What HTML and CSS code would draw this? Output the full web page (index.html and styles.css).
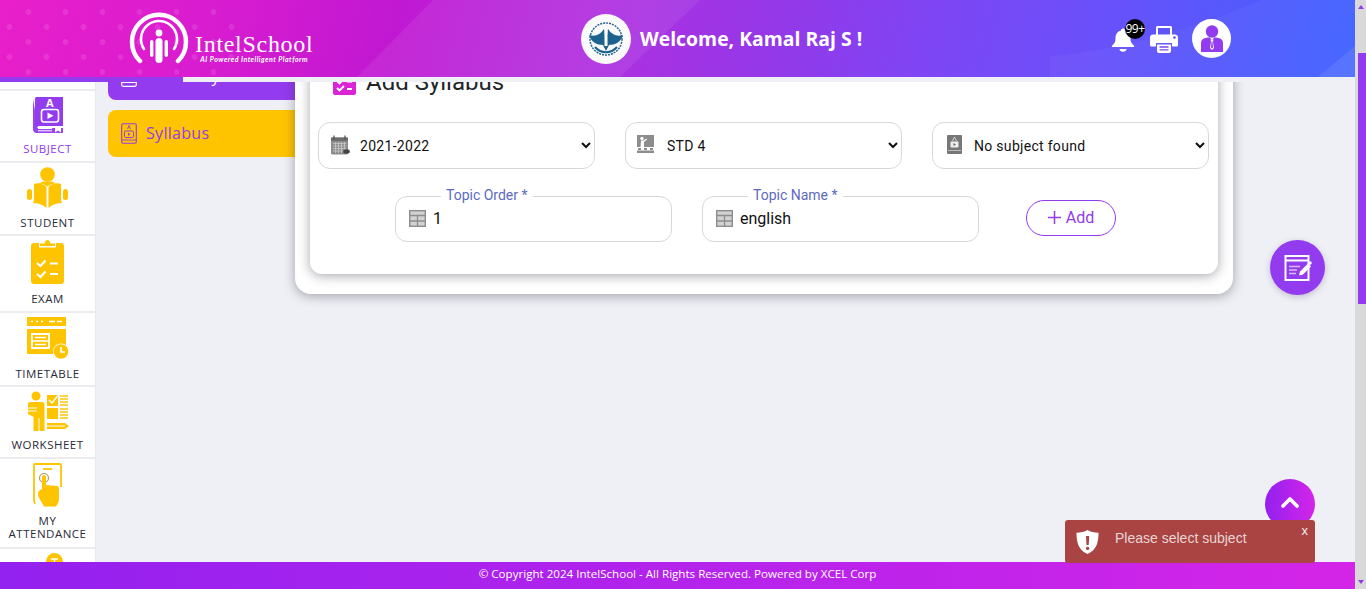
FILE: index.html
```html
<!DOCTYPE html>
<html lang="en">
<head>
<meta charset="utf-8">
<title>IntelSchool - Add Syllabus</title>
<link rel="stylesheet" href="styles.css">
</head>
<body>
<div class="page">
  <div class="main">
    <header class="header">
      <svg class="header-art" viewBox="0 0 1355 77" preserveAspectRatio="none" aria-hidden="true">
        <path d="M357 77 L433 0 H700 L620 77 Z" fill="#fff" opacity=".07"/>
        <path d="M1050 56 C1120 50 1190 30 1262 0 H1355 V77 H1050 Z" fill="#fff" opacity=".035"/>
        <path d="M1318 77 L1355 46 V77 Z" fill="#fff" opacity=".09"/>
      </svg>
      <div class="header-dots"></div>
      <div class="brand">
        <svg class="brand-mark" width="60" height="52" viewBox="0 0 60 52" aria-hidden="true">
          <g fill="none" stroke="#fff" stroke-linecap="round">
            <path d="M11 49 A27 27 0 1 1 49 49" stroke-width="4.5"/>
            <path d="M15 37 A18 18 0 1 1 45 37" stroke-width="2.6"/>
          </g>
          <circle cx="30" cy="21" r="3.4" fill="#fff"/>
          <rect x="26.5" y="26" width="7" height="25" rx="3.5" fill="#fff"/>
          <rect x="21" y="28" width="3.4" height="17" rx="1.7" fill="#fff"/>
          <rect x="35.6" y="28" width="3.4" height="17" rx="1.7" fill="#fff"/>
        </svg>
        <div class="brand-text">
          <span class="brand-name">IntelSchool</span>
          <span class="brand-tag">AI Powered Intelligent Platform</span>
        </div>
      </div>
      <div class="welcome">
        <span class="school-badge">
          <svg width="38" height="38" viewBox="0 0 38 38" aria-hidden="true">
            <circle cx="19" cy="19" r="16" fill="none" stroke="#1f5f8f" stroke-width="1.4" stroke-dasharray="2 1"/>
            <path d="M2 15 C8 17 13 15 17 9 L19 22 L21 9 C25 15 30 17 36 15 C34 22 28 25 22 25 L19 31 L16 25 C10 25 4 22 2 15Z" fill="#1b628f"/>
            <path d="M8 27 C14 34 24 34 30 27" fill="none" stroke="#1b628f" stroke-width="2"/>
            <rect x="17.5" y="11" width="3" height="15" fill="#fff"/>
          </svg>
        </span>
        <h1 class="welcome-text">Welcome, Kamal Raj S !</h1>
      </div>
      <div class="header-actions">
        <span class="bell">
          <svg width="24" height="25" viewBox="0 0 24 25" aria-hidden="true">
            <path d="M12 1.500c1.200 0 2 .8 2 1.900 4 .9 5.500 4.200 5.500 8 0 3.300.9 4.800 3.500 7.300.6.600.2 1.300-.5 1.300H1.500c-.7 0-1.100-.7-.5-1.300 2.600-2.500 3.500-4 3.500-7.300 0-3.800 1.500-7.100 5.500-8 0-1.100.8-1.900 2-1.900Z" fill="#fff"/>
            <path d="M8.500 22h7c0 1.700-1.500 2.800-3.500 2.800S8.500 23.700 8.500 22Z" fill="#fff"/>
          </svg>
          <span class="bell-badge">99+</span>
        </span>
        <svg class="printer" width="28" height="28" viewBox="0 0 28 28" aria-hidden="true">
          <path d="M6 10V2.500C6 1.600 6.600 1 7.500 1h13c.9 0 1.500.6 1.500 1.500V10h-2V3H8v7Z" fill="#fff"/>
          <path d="M3 9.500h22c1.700 0 3 1.300 3 3V20c0 .8-.6 1.500-1.500 1.500H22V18H6v3.500H1.500C.6 21.500 0 20.800 0 20v-7.500c0-1.700 1.300-3 3-3Z" fill="#fff"/>
          <circle cx="24.500" cy="12.500" r="1.300" fill="#6b4cf6"/>
          <path d="M7 19.500h14v6.500c0 1.100-.9 2-2 2H9c-1.100 0-2-.9-2-2Z" fill="#fff"/>
          <path d="M9.500 22h9M9.500 24.800h9" stroke="#7a4af0" stroke-width="1.300"/>
        </svg>
        <span class="avatar">
          <svg width="26" height="27" viewBox="0 0 26 27" aria-hidden="true">
            <circle cx="13" cy="6.500" r="6.200" fill="#933bee"/>
            <path d="M2 27V18c0-3 2-4.500 4.500-5l4 -.7L13 15l2.500-2.700 4 .7c2.500.5 4.500 2 4.500 5v9Z" fill="#933bee"/>
            <path d="M11.500 14.500h3L14 17l1 6-2 2-2-2 1-6Z" fill="#fff"/>
            <path d="M12.500 16.500h1l.5 6-1 1-1-1Z" fill="#933bee"/>
          </svg>
        </span>
      </div>
    </header>
    <div class="subbar"><span class="subbar-fill"></span></div>

    <div class="content">
      <nav class="sidebar">
        <div class="side-cut"></div>
        <a class="side-item side-item-first is-active">
          <svg width="30" height="36" viewBox="0 0 30 36" aria-hidden="true">
            <path d="M3 0h27v29H4a2.500 2.500 0 0 0-2 1V2c0-1 .4-2 1-2Z" fill="#933bee"/>
            <path d="M0 2v30c0 2 1.300 4 3.500 4H30v-5H5c-1.500 0-1.500-1 0-1" fill="#933bee" opacity=".95"/>
            <path d="M5 31.500h14M5 33.800h14" stroke="#fff" stroke-width="1"/>
            <path d="M22 30.500h6v5l-3-2-3 2Z" fill="#fff"/>
            <rect x="8.500" y="12.500" width="17" height="12.500" rx="2.500" fill="none" stroke="#fff" stroke-width="1.600"/>
            <path d="M14.500 15.500l6 3.200-6 3.200Z" fill="#fff"/>
            <text class="book-letter" x="17" y="10" text-anchor="middle">A</text>
          </svg>
          <span>SUBJECT</span>
        </a>
        <a class="side-item">
          <svg width="41" height="41" viewBox="0 0 41 41" aria-hidden="true">
            <circle cx="20.500" cy="7.500" r="7.300" fill="#ffc400"/>
            <path d="M7 17c4-1.500 9-.5 12.500 3v21C16 37.500 11 36 6 36l1-3V17Z" fill="#ffc400"/>
            <path d="M34 17c-4-1.500-9-.5-12.500 3v21c3.500-3.500 8.500-5 13.500-5l-1-3Z" fill="#ffc400"/>
            <path d="M12 16.500c3 0 6 1.100 8.500 3 2.500-1.900 5.500-3 8.500-3l-4 -2h-9Z" fill="#ffc400"/>
            <rect x="0" y="22" width="5" height="11" rx="2.500" fill="#ffc400"/>
            <rect x="36" y="22" width="5" height="11" rx="2.500" fill="#ffc400"/>
          </svg>
          <span>STUDENT</span>
        </a>
        <a class="side-item side-item-tall">
          <svg width="33" height="44" viewBox="0 0 33 44" aria-hidden="true">
            <path d="M3 3h5v4.500h17V3h5c1.700 0 3 1.300 3 3v35c0 1.700-1.300 3-3 3H3c-1.700 0-3-1.300-3-3V6c0-1.700 1.300-3 3-3Z" fill="#ffc400"/>
            <path d="M9 6V3.500h4.500C14 1.500 15 0 16.500 0s2.500 1.500 3 3.500H24V6Z" fill="#ffc400"/>
            <path d="M6 23l3.500 3 5-5.500M6 34l3.500 3 5-5.500" fill="none" stroke="#fff" stroke-width="2.200"/>
            <path d="M19 23.500h8M19 34h8" stroke="#fff" stroke-width="2.200"/>
          </svg>
          <span>EXAM</span>
        </a>
        <a class="side-item">
          <svg width="42" height="42" viewBox="0 0 42 42" aria-hidden="true">
            <rect x="0" y="0" width="39" height="9" fill="#ffc400"/>
            <path d="M4 4.500h2M9 4.500h2M14 4.500h2M22 4.500h6M30 4.500h5" stroke="#fff" stroke-width="1.500"/>
            <rect x="0" y="12" width="39" height="25" fill="#ffc400"/>
            <path d="M5 17h17v14H5Z" fill="none" stroke="#fff" stroke-width="1.800"/>
            <path d="M5 24h17M8 20.500h11M8 27.500h11" stroke="#fff" stroke-width="1.500"/>
            <circle cx="34" cy="34.500" r="8" fill="#fff"/>
            <circle cx="34" cy="34.500" r="7.300" fill="#ffc400"/>
            <path d="M34 30v5h4" fill="none" stroke="#fff" stroke-width="1.600"/>
          </svg>
          <span>TIMETABLE</span>
        </a>
        <a class="side-item side-item-snug">
          <svg width="42" height="40" viewBox="0 0 42 40" aria-hidden="true">
            <circle cx="9" cy="5" r="4.500" fill="#ffc400"/>
            <path d="M3 11h12c1.500 0 2.500 1 2.500 2.500V40h-5V27h-1v13h-5V26C4 24 1 24 1 22V13c0-1 1-2 2-2Z" fill="#ffc400"/>
            <path d="M1 17h9M1 20h9" stroke="#fff" stroke-width="1"/>
            <rect x="20" y="4" width="11" height="11" fill="#ffc400"/>
            <path d="M22 9l3 3 8-10" fill="none" stroke="#fff" stroke-width="1.500"/>
            <path d="M33 5h8M33 8h8M33 11h8M33 14h8M33 18h8M33 21h8M33 24h8M33 27h8" stroke="#ffc400" stroke-width="1.500"/>
            <rect x="20" y="17" width="11" height="11" fill="#ffc400"/>
            <path d="M20 32h18l4 3-4 3H20Z" fill="#ffc400"/>
            <path d="M20 35h18" stroke="#fff" stroke-width="1"/>
          </svg>
          <span>WORKSHEET</span>
        </a>
        <a class="side-item side-item-wrap">
          <svg width="29" height="44" viewBox="0 0 29 44" aria-hidden="true">
            <path d="M1 39V2.500C1 1.500 1.700 1 2.500 1h24c.8 0 1.500.5 1.500 1.500V24" fill="none" stroke="#ffc400" stroke-width="1.800"/>
            <path d="M10 6h9" stroke="#ffc400" stroke-width="1.800"/>
            <circle cx="11" cy="15" r="4.500" fill="none" stroke="#b59a5a" stroke-width="1.200"/>
            <path d="M9 14c0-2.500 4-2.500 4 0v8l11 1c1.500 0 2 1.500 2 3v10c0 3-1.500 5-3 7.500H11C9 39 5 35 5 31c0-2 1-4 4-5Z" fill="#ffc400"/>
            <path d="M1 40h1.500" stroke="#ffc400" stroke-width="2"/>
          </svg>
          <span class="side-label-wrap">MY ATTENDANCE</span>
        </a>
        <a class="side-item side-item-peek">
          <svg width="17" height="17" viewBox="0 0 17 17" aria-hidden="true">
            <circle cx="8.500" cy="8.500" r="8.500" fill="#ffc400"/>
            <path d="M5 6h7M8.500 6v5M6 10h5" stroke="#fff" stroke-width="1.500"/>
          </svg>
        </a>
      </nav>

      <div class="menu-col">
        <a class="menu-card menu-card-purple">
          <svg width="16" height="21" viewBox="0 0 16 21" aria-hidden="true">
            <rect x=".7" y=".7" width="14.600" height="19.600" rx="1.500" fill="none" stroke="#fff" stroke-width="1.200"/>
            <rect x="4" y="8" width="8" height="6" rx="1" fill="none" stroke="#fff"/>
            <path d="M1 16.500h14" stroke="#fff"/>
          </svg>
          <span>Summary</span>
        </a>
        <a class="menu-card menu-card-active">
          <svg width="16" height="21" viewBox="0 0 16 21" aria-hidden="true">
            <rect x=".7" y=".7" width="14.600" height="19.600" rx="1.500" fill="none" stroke="#933bee" stroke-width="1.100"/>
            <rect x="3.500" y="8" width="9" height="6.500" rx="1.200" fill="none" stroke="#933bee"/>
            <path d="M7 9.700l2.500 1.500L7 12.800Z" fill="#933bee"/>
            <path d="M6.500 6l1.500-3.500L9.500 6M1 17h14" fill="none" stroke="#933bee" stroke-width=".9"/>
          </svg>
          <span>Syllabus</span>
        </a>
      </div>

      <section class="panel">
        <div class="card">
          <div class="card-title">
            <svg width="23" height="23" viewBox="0 0 23 23" aria-hidden="true">
              <path d="M2 0h19c1.100 0 2 .9 2 2v19c0 1.100-.9 2-2 2H2c-1.100 0-2-.9-2-2V2C0 .9.900 0 2 0Z" fill="#db24d6"/>
              <path d="M4 9l2.500 2.500L11 7M4 16l2.500 2.500L11 14" fill="none" stroke="#fff" stroke-width="1.800"/>
              <path d="M14 9.500h5M14 17h5" stroke="#fff" stroke-width="1.800"/>
            </svg>
            <h2>Add Syllabus</h2>
          </div>
          <div class="select-row">
            <label class="field">
              <svg class="field-icon" width="20" height="20" viewBox="0 0 20 20" aria-hidden="true">
                <rect x="1" y="2.500" width="17" height="17" rx="1.500" fill="#8d8d8d"/>
                <rect x="1" y="2.500" width="17" height="3.500" fill="#6d6d6d"/>
                <path d="M4 .500v4M15 .500v4" stroke="#555" stroke-width="1.300"/>
                <path d="M3 8.500h13M3 11h13M3 13.500h13M3 16h13M5.500 7v11M8.500 7v11M11.500 7v11M14.500 7v11" stroke="#c8c8c8" stroke-width=".8"/>
                <ellipse cx="16.500" cy="16.500" rx="3.300" ry="2.200" fill="#444"/>
              </svg>
              <select class="control select"><option>2021-2022</option></select>
            </label>
            <label class="field">
              <svg class="field-icon" width="18" height="18" viewBox="0 0 18 18" aria-hidden="true">
                <rect x="0" y="0" width="17" height="12" fill="#8d8d8d"/>
                <circle cx="5" cy="3.500" r="1.700" fill="#fff"/>
                <path d="M4 5.500h2.500l3-2 .5 1-3 2.500V12H3.500Z" fill="#fff"/>
                <rect x="1" y="13" width="3" height="2" fill="#8d8d8d"/>
                <rect x="7" y="13" width="3" height="2" fill="#8d8d8d"/>
                <rect x="13" y="13" width="3" height="2" fill="#8d8d8d"/>
                <rect x="0" y="15.500" width="17" height="2.500" fill="#8d8d8d"/>
              </svg>
              <select class="control select"><option>STD 4</option></select>
            </label>
            <label class="field">
              <svg class="field-icon field-icon-book" width="15" height="19" viewBox="0 0 15 19" aria-hidden="true">
                <rect x="0" y="0" width="15" height="19" rx="1" fill="#777"/>
                <path d="M5.500 6l2-4 2 4" fill="none" stroke="#ddd" stroke-width=".9"/>
                <rect x="3.500" y="6.500" width="8" height="6" rx="1" fill="#eee"/>
                <path d="M6.500 8l2.500 1.500L6.500 11Z" fill="#666"/>
                <path d="M1 15.500h13" stroke="#bbb"/>
              </svg>
              <select class="control select"><option>No subject found</option></select>
            </label>
          </div>
          <div class="input-row">
            <label class="field field-input">
              <span class="float-label">Topic Order *</span>
              <svg class="input-icon" width="17" height="17" viewBox="0 0 17 17" aria-hidden="true">
                <rect x=".7" y=".7" width="15.600" height="15.600" fill="#d2d2d2" stroke="#8d8d8d" stroke-width="1.400"/>
                <path d="M1 5.500h15M1 11h15M8.500 5.500v11" stroke="#8d8d8d" stroke-width="1.300"/>
              </svg>
              <input class="control input" type="text" value="1">
            </label>
            <label class="field field-input">
              <span class="float-label">Topic Name *</span>
              <svg class="input-icon" width="17" height="17" viewBox="0 0 17 17" aria-hidden="true">
                <rect x=".7" y=".7" width="15.600" height="15.600" fill="#d2d2d2" stroke="#8d8d8d" stroke-width="1.400"/>
                <path d="M1 5.500h15M1 11h15M8.500 5.500v11" stroke="#8d8d8d" stroke-width="1.300"/>
              </svg>
              <input class="control input" type="text" value="english">
            </label>
            <button class="add-btn" type="button">
              <svg width="13" height="13" viewBox="0 0 13 13" aria-hidden="true"><path d="M6.500 0v13M0 6.500h13" stroke="#933bee" stroke-width="1.500"/></svg>
              <span>Add</span>
            </button>
          </div>
        </div>
      </section>
    </div>

    <footer class="footer">© Copyright 2024 IntelSchool - All Rights Reserved. Powered by XCEL Corp</footer>
  </div>

  <aside class="scrollbar" aria-hidden="true">
    <span class="arrow arrow-up"></span>
    <span class="thumb"></span>
    <span class="arrow arrow-down"></span>
  </aside>

  <button class="fab fab-note" type="button" aria-label="Notes">
    <svg width="28" height="26" viewBox="0 0 28 26" aria-hidden="true">
      <path d="M1.500 1h23v24h-23Z" fill="none" stroke="#fff" stroke-width="2"/>
      <path d="M1.500 5.500h23" stroke="#fff" stroke-width="2"/>
      <path d="M5 11.500h11M5 15h8M5 18.500h7" stroke="#d9bdfa" stroke-width="1.500"/>
      <path d="M15 20.500l1-4 8-8 3 3-8 8Z" fill="#fff"/>
      <circle cx="26" cy="8" r="1.800" fill="#fff"/>
    </svg>
  </button>
  <button class="fab fab-top" type="button" aria-label="Back to top">
    <svg width="18" height="12" viewBox="0 0 18 12" aria-hidden="true"><path d="M2 10l7-7 7 7" fill="none" stroke="#fff" stroke-width="3.600" stroke-linecap="round" stroke-linejoin="round"/></svg>
  </button>
  <div class="toast" role="alert">
    <svg width="23" height="24" viewBox="0 0 23 24" aria-hidden="true">
      <path d="M11.500 0c3 1.700 6.500 2.700 11 2.700 0 9-1.500 17-11 21.300C2 19.700.500 11.700.500 2.700 5 2.700 8.500 1.700 11.500 0Z" fill="#fff"/>
      <path d="M10 6h3.200l-.5 9h-2.200Z" fill="#a94442"/>
      <circle cx="11.600" cy="18.400" r="1.700" fill="#a94442"/>
    </svg>
    <span class="toast-text">Please select subject</span>
    <span class="toast-close">x</span>
  </div>
</div>
</body>
</html>
```
FILE: styles.css
```css
* { box-sizing: border-box; }
html, body { margin: 0; height: 100%; overflow: hidden; }
body { font-family: "Open Sans", "Liberation Sans", sans-serif; background: #eff0f5; color: #212529; }
a { color: inherit; text-decoration: none; }
svg { display: block; flex: none; }

.page { position: relative; display: flex; width: 1366px; height: 589px; overflow: hidden; }
.main { width: 1355px; height: 589px; display: flex; flex-direction: column; }

/* Header */
.header {
  position: relative;
  z-index: 3;
  flex: none;
  height: 77px;
  display: flex;
  align-items: center;
  background: linear-gradient(104deg, #e81fca 0%, #d81cd0 16%, #c118d2 29%, #b02fe0 44%, #9438e8 57%, #7f45f4 68%, #6a50fa 80%, #3f63ff 100%);
  color: #fff;
}
.header-art { position: absolute; inset: 0; width: 100%; height: 100%; }
.header-dots {
  position: absolute;
  left: 0; top: 0;
  width: 240px; height: 77px;
  background-image:
    radial-gradient(circle, rgba(255,255,255,.1) 2.600px, transparent 3.200px),
    radial-gradient(circle, rgba(255,255,255,.1) 2.600px, transparent 3.200px);
  background-size: 37px 30px;
  background-position: 10px -3px, 28px 12px;
}
.brand { position: relative; display: flex; align-items: flex-end; margin-left: 129px; width: 184px; height: 52px; margin-top: -1px; }
.brand-mark { margin-right: 6px; }
.brand-text { display: flex; flex-direction: column; align-items: center; margin-bottom: 1px; }
.brand-name { font-family: "Liberation Serif", serif; font-size: 24px; line-height: 22px; letter-spacing: .7px; white-space: nowrap; }
.brand-tag { font-family: "Lato", sans-serif; font-size: 7px; line-height: 8px; font-weight: 700; font-style: italic; letter-spacing: .5px; white-space: nowrap; }
.welcome { position: relative; display: flex; align-items: center; gap: 9px; margin-left: 268px; }
.school-badge { width: 50px; height: 50px; border-radius: 50%; background: #fafafa; display: flex; align-items: center; justify-content: center; }
.welcome-text { margin: 0; font-size: 19.400px; line-height: 28px; font-weight: 700; white-space: nowrap; }
.header-actions { position: absolute; left: 1111px; top: 19px; display: flex; align-items: center; }
.bell { position: relative; display: block; margin-top: 1px; }
.bell-badge {
  position: absolute; left: 14px; top: -8px;
  width: 20px; height: 20px; border-radius: 50%;
  background: #000; color: #fff;
  font-size: 12px; line-height: 20px; text-align: center; letter-spacing: -.5px; white-space: nowrap;
}
.printer { margin-left: 15px; }
.avatar { width: 39px; height: 39px; margin-left: 14px; border-radius: 50%; background: #fff; display: flex; align-items: center; justify-content: center; }

.subbar { flex: none; height: 5px; background: #eff0f5; position: relative; z-index: 3; }
.subbar-fill { display: block; width: 183px; height: 5px; background: #933bee; }

/* Content */
.content { flex: 1; min-height: 0; display: flex; align-items: flex-start; overflow: hidden; }

.sidebar { flex: none; width: 96px; height: 480px; overflow: hidden; background: #fff; border-right: 1px solid #e9e9ee; }
.side-cut { height: 9px; border-bottom: 2px solid #ececf0; }
.side-item {
  display: flex; flex-direction: column; align-items: center; gap: 8px;
  padding: 4px 0 5px;
  border-bottom: 2px solid #ececf0;
  font-size: 11.500px; line-height: 13px; letter-spacing: .5px; text-align: center; color: #2a2a3a;
}
.side-item-first { gap: 9px; padding-top: 6px; padding-bottom: 6px; }
.side-item-tall { padding-bottom: 6px; }
.side-item-snug { gap: 7px; padding-bottom: 6px; }
.side-item-wrap { gap: 7px; padding-bottom: 7px; }
.side-label-wrap { display: block; width: 80px; }
.side-item.is-active { color: #933bee; }
.side-item-peek { padding-top: 4px; border-bottom: 0; }
.side-item-peek svg { margin-left: 14px; }
.book-letter { font-family: "Open Sans", sans-serif; font-size: 11px; font-weight: 700; fill: #fff; }

.menu-col { flex: none; width: 187px; margin-left: 12px; margin-top: -29px; display: flex; flex-direction: column; gap: 10px; }
.menu-card { height: 47px; display: flex; align-items: center; gap: 9px; padding: 0 0 1px 13px; border-radius: 8px 0 0 8px; font-size: 16px; letter-spacing: .3px; }
.menu-card-purple { background: #933bee; color: #fff; }
.menu-card-active { background: #ffc400; color: #933bee; }

.panel {
  flex: none; position: relative;
  width: 938px; margin-top: -42px;
  padding: 15px;
  padding-bottom: 20px;
  background: #fff; border-radius: 16px;
  box-shadow: 0 2px 12px rgba(40,40,60,.4);
}
.card {
  height: 219px;
  padding: 17px 8px 0;
  background: #fff; border-radius: 12px;
  box-shadow: 0 2px 12px rgba(40,40,60,.4);
}
.card-title { display: flex; align-items: center; gap: 10px; margin-left: 15px; height: 23px; }
.card-title h2 { margin: -2px 0 0; font-family: Roboto, sans-serif; font-size: 24px; line-height: 27px; font-weight: 400; color: #212529; }

.select-row { display: grid; grid-template-columns: repeat(3, 277px); gap: 30px; margin-top: 27px; }
.input-row { display: flex; align-items: center; gap: 30px; margin-top: 27px; margin-left: 77px; }
.field { position: relative; display: block; width: 277px; }
.field-icon { position: absolute; left: 12px; top: 13px; pointer-events: none; }
.field-icon-book { left: 15px; }
.control {
  width: 100%; height: 47px;
  border: 1px solid #d8d8d8; border-radius: 12px;
  background: #fff; color: #111;
  font-family: Roboto, sans-serif;
  outline: 0;
}
.select { padding-left: 37px; font-size: 14px; letter-spacing: .3px; }
.input { height: 46px; padding: 0 0 2px 37px; font-size: 16px; }
.input-icon { position: absolute; left: 14px; top: 14px; pointer-events: none; }
.float-label {
  position: absolute; left: 46px; top: -9px;
  padding: 0 5px; background: #fff;
  font-family: Roboto, sans-serif; font-size: 14px; line-height: 17px; color: #5c6bc0;
}
.add-btn {
  display: flex; align-items: center; justify-content: center; gap: 5px;
  width: 90px; height: 36px; margin: -2px 0 0 17px; padding: 0 2px 2px 2px;
  border: 1px solid #933bee; border-radius: 18px;
  background: #fff; color: #933bee;
  font-family: Roboto, sans-serif; font-size: 16px;
}

.footer {
  flex: none; position: relative; z-index: 3;
  height: 27px;
  background: linear-gradient(90deg, #9321ef, #d425e8);
  color: #fff;
  font-size: 11.600px; line-height: 24px; text-align: center;
}

/* Scrollbar */
.scrollbar { flex: none; width: 11px; height: 589px; background: #d9d9d9; display: flex; flex-direction: column; align-items: center; }
.arrow { width: 0; height: 0; border-left: 3px solid transparent; border-right: 3px solid transparent; }
.arrow-up { border-bottom: 4px solid #933bee; margin-top: 5px; }
.thumb { width: 8px; height: 251px; background: #933bee; margin-top: 44px; margin-left: 2px; margin-bottom: auto; }
.arrow-down { border-top: 4px solid #933bee; margin-bottom: 5px; }

/* Floating */
.fab { position: absolute; z-index: 4; border: 0; padding: 0; border-radius: 50%; display: flex; align-items: center; justify-content: center; }
.fab-note { left: 1270px; top: 240px; width: 55px; height: 55px; background: #933bee; box-shadow: 0 2px 6px rgba(60,40,100,.25); }
.fab-top { left: 1265px; top: 479px; width: 50px; height: 50px; background: linear-gradient(90deg, #9321ef, #d425e8); padding-bottom: 4px; }
.toast {
  position: absolute; z-index: 5; left: 1065px; top: 520px;
  width: 250px; height: 43px;
  display: flex; align-items: center;
  padding: 0 0 0 11px;
  background: #a94442; border-radius: 3px;
  color: rgba(255,255,255,.78);
  font-family: "Liberation Sans", sans-serif; font-size: 14px;
}
.toast-text { margin: 0 0 7px 16px; }
.toast-close { position: absolute; right: 7px; top: 3px; font-size: 13px; line-height: 16px; color: #eee; }
```
